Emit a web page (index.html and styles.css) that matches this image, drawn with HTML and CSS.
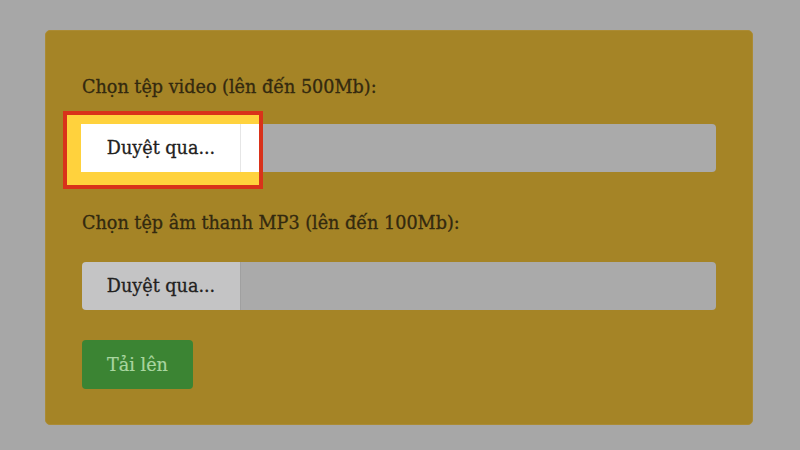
FILE: index.html
```html
<!DOCTYPE html>
<html lang="vi">
<head>
<meta charset="utf-8">
<title>Tải lên tệp</title>
<link rel="stylesheet" href="styles.css">
</head>
<body>
  <main class="card">
    <form class="upload-form">
      <div class="label">Chọn tệp video (lên đến 500Mb):</div>
      <div class="file-row file-row--video">
        <span class="highlight" aria-hidden="true"></span>
        <span class="browse browse--active">Duyệt qua...</span>
        <span class="field"></span>
      </div>

      <div class="label label--second">Chọn tệp âm thanh MP3 (lên đến 100Mb):</div>
      <div class="file-row">
        <span class="browse">Duyệt qua...</span>
        <span class="field"></span>
      </div>

      <button type="button" class="submit">Tải lên</button>
    </form>
  </main>
</body>
</html>
```

FILE: styles.css
```css
* {
  box-sizing: border-box;
}

html {
  background: #a7a7a7;
}

body {
  margin: 30px 47px 0 45px;
  font-family: "DejaVu Serif", "Liberation Serif", serif;
  background: #a7a7a7;
}

.card {
  background: #a58426;
  border: 1px solid #ab8b34;
  border-radius: 5px;
  padding: 44px 36px 35px 36px;
}

.upload-form {
  display: flex;
  flex-direction: column;
  align-items: flex-start;
}

.label {
  font-size: 17.6px;
  line-height: 24px;
  color: #33290f;
  -webkit-text-stroke: 0.3px currentColor;
  margin-bottom: 25px;
}

.label--second {
  margin-top: 39px;
  margin-bottom: 27px;
}

.file-row {
  position: relative;
  display: flex;
  width: 100%;
  height: 48px;
}

.browse {
  position: relative;
  z-index: 2;
  width: 159px;
  display: flex;
  align-items: center;
  justify-content: center;
  font-size: 17.6px;
  color: #222120;
  -webkit-text-stroke: 0.3px currentColor;
  background: #c4c4c5;
  border-radius: 4px 0 0 4px;
  border-right: 1px solid #a0a0a0;
}

.browse--active {
  background: #ffffff;
  border-right-color: #e6e6e6;
}

.field {
  position: relative;
  z-index: 0;
  flex: 1;
  background: #aaaaaa;
  border-radius: 0 4px 4px 0;
}

.highlight {
  position: absolute;
  z-index: 1;
  left: -19px;
  top: -13px;
  width: 200px;
  height: 78px;
  border: 4px solid #d9321a;
  background: #ffd23d;
}

.highlight::before {
  content: "";
  position: absolute;
  left: 14px;
  right: 0;
  top: 9px;
  height: 48px;
  background: #ffffff;
}

.submit {
  margin-top: 30px;
  width: 111px;
  height: 49px;
  padding: 0;
  border: none;
  border-radius: 4px;
  background: #3b8433;
  color: #a9d6a0;
  font-family: "DejaVu Serif", "Liberation Serif", serif;
  font-size: 17.6px;
  -webkit-text-stroke: 0.2px currentColor;
}
```
